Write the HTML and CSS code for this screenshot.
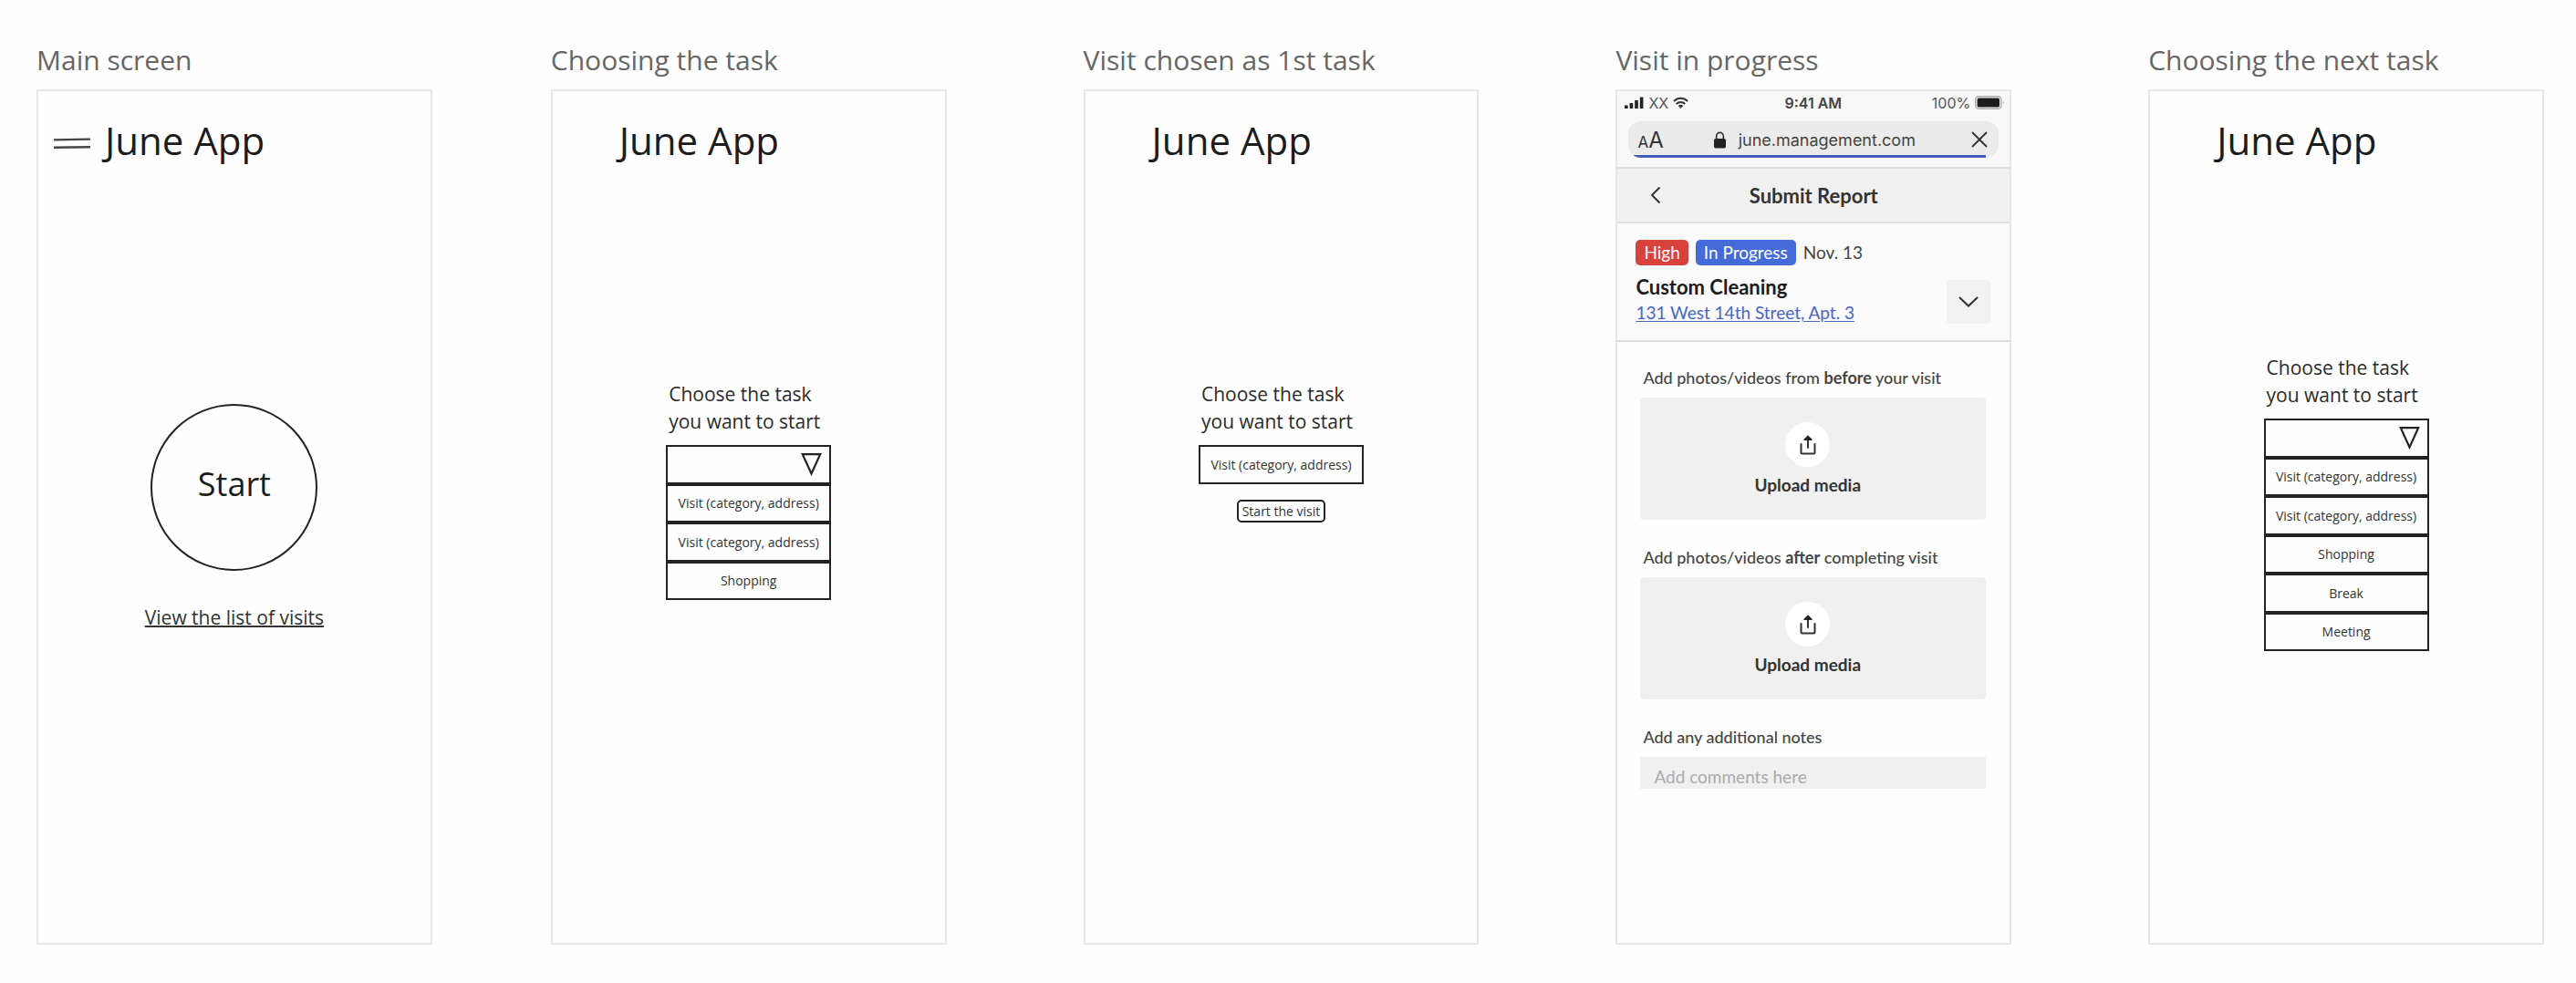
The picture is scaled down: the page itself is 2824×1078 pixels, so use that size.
FILE: index.html
```html
<!DOCTYPE html>
<html lang="en">
<head>
<meta charset="utf-8">
<meta name="viewport" content="width=device-width, initial-scale=1">
<title>June App wireframes</title>
<link rel="stylesheet" href="styles.css">
</head>
<body>
<svg class="sprite" aria-hidden="true">
  <symbol id="triangle" viewBox="0 0 23 25"><path d="M1.8 1.2h19.4L11.5 22.5z" fill="none" stroke="#222" stroke-width="2.2"/></symbol>
  <symbol id="upload" viewBox="0 0 18 22"><path d="M1.5 10v9a1.5 1.5 0 0 0 1.5 1.5h12a1.5 1.5 0 0 0 1.500-1.500v-9M9 14V3" fill="none" stroke="#333" stroke-width="2" stroke-linecap="round"/><path d="M5 5.200 9 1.300l4 3.900z" fill="#222" stroke="#222" stroke-width="1.400" stroke-linejoin="round"/></symbol>
</svg>
<main class="board">

  <section class="screen">
    <h2 class="screen-title">Main screen</h2>
    <div class="frame">
      <header class="app-header app-header-menu">
        <button class="menu" type="button" aria-label="Menu">
          <svg width="40" height="14" viewBox="0 0 40 14"><path d="M0 3.400 40 2.600M0 11.800 40 11.200" stroke="#444" stroke-width="2.400"/></svg>
        </button>
        <h1 class="app-name">June App</h1>
      </header>
      <div class="home">
        <button class="start" type="button">Start</button>
        <a class="visits-link" href="#visits">View the list of visits</a>
      </div>
    </div>
  </section>

  <section class="screen">
    <h2 class="screen-title">Choosing the task</h2>
    <div class="frame">
      <header class="app-header"><h1 class="app-name">June App</h1></header>
      <div class="chooser">
        <label class="prompt" for="task">Choose the task you want to start</label>
        <div class="options">
          <div class="option picker">
            <select class="picker-select" id="task"><option value=""></option></select>
            <svg class="picker-arrow" width="23" height="25" aria-hidden="true"><use href="#triangle"/></svg>
          </div>
          <button class="option" type="button">Visit (category, address)</button>
          <button class="option" type="button">Visit (category, address)</button>
          <button class="option" type="button">Shopping</button>
        </div>
      </div>
    </div>
  </section>

  <section class="screen">
    <h2 class="screen-title">Visit chosen as 1st task</h2>
    <div class="frame">
      <header class="app-header"><h1 class="app-name">June App</h1></header>
      <div class="chooser">
        <p class="prompt">Choose the task you want to start</p>
        <div class="options options-single">
          <button class="option" type="button">Visit (category, address)</button>
        </div>
        <button class="start-visit" type="button">Start the visit</button>
      </div>
    </div>
  </section>

  <section class="screen">
    <h2 class="screen-title">Visit in progress</h2>
    <div class="frame report">
      <div class="browser">
        <div class="status">
          <div class="status-side">
            <svg width="21" height="14" viewBox="0 0 21 14" aria-hidden="true"><path d="M0 9.500h3.600V13H0zM5.600 7h3.600v6H5.600zM11.200 4h3.600v9h-3.600zM16.800 0.500h3.600V13h-3.600z" fill="#222"/></svg>
            <span>XX</span>
            <svg width="17" height="14" viewBox="0 0 17 14" aria-hidden="true"><path d="M1 5a10.500 10.500 0 0 1 15 0M3.700 8a6.800 6.800 0 0 1 9.600 0" fill="none" stroke="#333" stroke-width="2"/><path d="M5.800 10a4 4 0 0 1 5.400 0l-2.700 3z" fill="#333"/></svg>
          </div>
          <span class="clock">9:41 AM</span>
          <div class="status-side status-right">
            <span>100%</span>
            <svg width="33" height="15" viewBox="0 0 33 15" aria-hidden="true"><rect x="0.800" y="0.800" width="28" height="13.400" rx="3.500" fill="none" stroke="#aaa" stroke-width="1.400"/><rect x="2.600" y="2.600" width="24.400" height="9.800" rx="1.500" fill="#1c1c1c"/><path d="M30.800 5v5q1.800-2.500 0-5z" fill="#aaa"/></svg>
          </div>
        </div>
        <div class="address-bar">
          <div class="text-size" aria-label="Text size"><span class="small-a">A</span><span class="big-a">A</span></div>
          <div class="url">
            <svg width="13" height="19" viewBox="0 0 13 19" aria-hidden="true"><rect y="8" width="13" height="10.500" rx="1.800" fill="#222"/><path d="M2.700 8.500V5.200a3.800 3.800 0 0 1 7.600 0v3.300" fill="none" stroke="#333" stroke-width="1.700"/></svg>
            <span>june.management.com</span>
          </div>
          <button class="stop" type="button" aria-label="Stop loading">
            <svg width="18" height="18" viewBox="0 0 18 18"><path d="m1 1 16 16M17 1 1 17" stroke="#333" stroke-width="1.900"/></svg>
          </button>
          <div class="progress"></div>
        </div>
      </div>
      <header class="nav">
        <button class="back" type="button" aria-label="Back">
          <svg width="12" height="20" viewBox="0 0 12 20"><path d="M10.500 1.500 2 10l8.500 8.500" fill="none" stroke="#333" stroke-width="2"/></svg>
        </button>
        <h3 class="nav-title">Submit Report</h3>
      </header>
      <div class="job">
        <div class="job-info">
          <div class="tags">
            <span class="tag tag-high">High</span>
            <span class="tag tag-progress">In Progress</span>
            <span>Nov. 13</span>
          </div>
          <h4 class="job-name">Custom Cleaning</h4>
          <a class="job-address" href="#map">131 West 14th Street, Apt. 3</a>
        </div>
        <button class="expand" type="button" aria-label="Show details">
          <svg width="22" height="12" viewBox="0 0 22 12"><path d="m1 1 10 9.500L21 1" fill="none" stroke="#333" stroke-width="2"/></svg>
        </button>
      </div>
      <form class="form">
        <div class="field">
          <p class="label">Add photos/videos from <b>before</b> your visit</p>
          <button class="upload" type="button">
            <span class="upload-icon"><svg width="18" height="22" aria-hidden="true"><use href="#upload"/></svg></span>
            Upload media
          </button>
        </div>
        <div class="field">
          <p class="label">Add photos/videos <b>after</b> completing visit</p>
          <button class="upload" type="button">
            <span class="upload-icon"><svg width="18" height="22" aria-hidden="true"><use href="#upload"/></svg></span>
            Upload media
          </button>
        </div>
        <div class="field">
          <label class="label" for="notes">Add any additional notes</label>
          <input class="notes" id="notes" type="text" placeholder="Add comments here">
        </div>
      </form>
    </div>
  </section>

  <section class="screen">
    <h2 class="screen-title">Choosing the next task</h2>
    <div class="frame">
      <header class="app-header"><h1 class="app-name">June App</h1></header>
      <div class="chooser chooser-next">
        <label class="prompt" for="next-task">Choose the task you want to start</label>
        <div class="options options-long">
          <div class="option picker">
            <select class="picker-select" id="next-task"><option value=""></option></select>
            <svg class="picker-arrow" width="23" height="25" aria-hidden="true"><use href="#triangle"/></svg>
          </div>
          <button class="option" type="button">Visit (category, address)</button>
          <button class="option" type="button">Visit (category, address)</button>
          <button class="option" type="button">Shopping</button>
          <button class="option" type="button">Break</button>
          <button class="option" type="button">Meeting</button>
        </div>
      </div>
    </div>
  </section>

</main>
</body>
</html>
```
FILE: styles.css
```css
* {
  box-sizing: border-box;
}

body {
  margin: 0;
  background: #fefefe;
  color: #1c1c1c;
  font-family: "Open Sans", "Noto Sans", sans-serif;
}

h1, h2, h3, h4, p {
  margin: 0;
  font-weight: 400;
}

button, input, select {
  margin: 0;
  padding: 0;
  border: 0;
  border-radius: 0;
  background: none;
  color: inherit;
  font: inherit;
}

svg {
  display: block;
  flex: none;
}

.sprite {
  position: absolute;
  width: 0;
  height: 0;
}

/* Board */
.board {
  display: flex;
  min-height: 100vh;
  padding: 46px 35px 42px 40px;
}

.screen {
  display: flex;
  flex: 1;
  flex-direction: column;
  gap: 12px;
  min-width: 0;
}

.screen + .screen {
  margin-left: 150px;
}

.screen:nth-child(2) {
  margin-left: 130px;
}

.screen-title {
  color: #666;
  font-size: 30px;
  line-height: 40px;
  white-space: nowrap;
}

.frame {
  flex: 1;
  border: 2px solid #e6e6e6;
}

/* Wireframe screens */
.app-header {
  display: flex;
  align-items: center;
  padding: 26px 16px 0 73px;
}

.app-header-menu {
  gap: 16px;
  padding-left: 17px;
}

.menu {
  padding-top: 6px;
}

.app-name {
  font-size: 42px;
  line-height: 56px;
}

.home {
  display: flex;
  flex-direction: column;
  align-items: center;
  gap: 36px;
  padding-top: 261px;
}

.start {
  width: 183px;
  height: 183px;
  padding-bottom: 8px;
  border: 2px solid #222;
  border-radius: 50%;
  font-size: 36px;
}

.visits-link {
  color: #333;
  font-size: 21px;
  line-height: 30px;
  text-decoration-thickness: 2px;
  text-underline-offset: 1px;
}

.chooser {
  display: flex;
  flex-direction: column;
  width: 181px;
  margin: 0 auto;
  padding-top: 235px;
}

.chooser-next {
  padding-top: 206px;
}

.prompt {
  padding-left: 3px;
  color: #2a2a2a;
  font-size: 21px;
  line-height: 30px;
}

.options {
  display: grid;
  grid-auto-rows: 1fr;
  min-height: 170px;
  margin-top: 11px;
  color: #333;
  font-size: 14px;
}

.options-single {
  min-height: 43px;
}

.options-long {
  min-height: 255px;
}

.option {
  border: 2px solid #222;
}

.picker {
  display: grid;
  align-items: center;
}

.picker-select,
.picker-arrow {
  grid-area: 1 / 1;
}

.picker-select {
  width: 100%;
  height: 100%;
  appearance: none;
}

.picker-arrow {
  justify-self: end;
  margin-right: 8px;
  pointer-events: none;
}

.start-visit {
  align-self: center;
  margin-top: 17px;
  padding: 0 4px;
  border: 2px solid #222;
  border-radius: 5px;
  color: #333;
  font-size: 14px;
  line-height: 21px;
}

/* Visit report */
.report {
  font-family: Lato, "Open Sans", sans-serif;
  font-size: 19px;
}

.browser {
  padding: 0 12px 10px;
  border-bottom: 2px solid #dedede;
  background: #f8f8f8;
  color: #444;
  font-family: Inter, "Liberation Sans", sans-serif;
}

.status {
  display: grid;
  grid-template-columns: 1fr auto 1fr;
  align-items: center;
  height: 25px;
  margin-right: -7px;
  margin-left: -4px;
  color: #555;
  font-size: 16px;
}

.status-side {
  display: flex;
  align-items: center;
  gap: 5px;
}

.status-right {
  justify-content: flex-end;
}

.clock {
  padding-right: 4px;
  color: #444;
  font-weight: 600;
}

.address-bar {
  position: relative;
  display: grid;
  grid-template-columns: 1fr auto 1fr;
  align-items: center;
  height: 40px;
  margin-top: 8px;
  padding: 0 12px 0 10px;
  overflow: hidden;
  border-radius: 14px;
  background: #ebebeb;
}

.text-size {
  display: flex;
  align-items: baseline;
  color: #333;
}

.small-a {
  font-size: 17px;
}

.big-a {
  font-size: 24px;
}

.url {
  display: flex;
  align-items: center;
  gap: 14px;
  padding-left: 4px;
  font-size: 18px;
}

.stop {
  justify-self: end;
}

.progress {
  position: absolute;
  right: 14px;
  bottom: 0;
  left: 6px;
  height: 3px;
  background: #4558bd;
}

.nav {
  display: grid;
  grid-template-columns: 1fr auto 1fr;
  align-items: center;
  height: 60px;
  padding: 0 36px;
  border-bottom: 2px solid #dedede;
  background: #f0f0f0;
}

.nav-title {
  color: #333;
  font-size: 22px;
  font-weight: 700;
}

.job {
  display: flex;
  align-items: flex-end;
  justify-content: space-between;
  padding: 18px 21px 18px 20px;
  border-bottom: 2px solid #dedede;
  background: #fafafa;
}

.tags {
  display: flex;
  align-items: center;
  gap: 8px;
  color: #444;
  line-height: 28px;
}

.tag {
  padding: 0 9px;
  border-radius: 5px;
  color: #fff;
}

.tag-high {
  background: #d9413d;
}

.tag-progress {
  background: #456bd9;
}

.job-name {
  margin: 10px 0 2px;
  color: #1c1c1c;
  font-size: 22px;
  font-weight: 700;
  line-height: 28px;
}

.job-address {
  display: block;
  color: #4a66c4;
  line-height: 24px;
  text-underline-offset: 2px;
}

.expand {
  display: grid;
  place-items: center;
  width: 48px;
  height: 48px;
  border-radius: 4px;
  background: #f1f1f1;
}

.form {
  display: flex;
  flex-direction: column;
  gap: 29px;
  padding: 27px 26px 27px 25px;
}

.field {
  display: flex;
  flex-direction: column;
  gap: 10px;
}

.label {
  padding-left: 3px;
  color: #444;
  font-size: 18px;
  font-weight: 500;
  line-height: 24px;
}

.upload {
  display: flex;
  flex-direction: column;
  align-items: center;
  gap: 8px;
  padding: 27px 12px 26px 0;
  border-radius: 4px;
  background: #f0f0f0;
  color: #333;
  font-weight: 700;
  line-height: 24px;
}

.upload-icon {
  display: grid;
  place-items: center;
  width: 49px;
  height: 49px;
  border-radius: 50%;
  background: #fff;
}

.notes {
  height: 35px;
  padding: 8px 15px 0;
  background: #f0f0f0;
}

.notes::placeholder {
  color: #aaa;
}
```
